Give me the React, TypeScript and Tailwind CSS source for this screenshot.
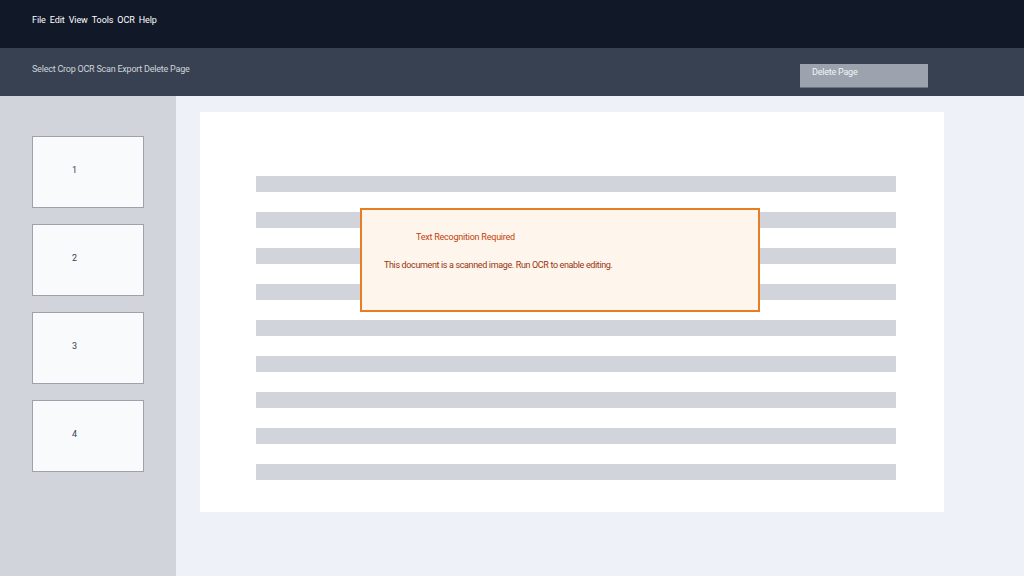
import React from 'react';

const menuItems = ['File', 'Edit', 'View', 'Tools', 'OCR', 'Help'];
const toolItems = ['Select', 'Crop', 'OCR Scan', 'Export', 'Delete Page'];
const pages = [1, 2, 3, 4];
const lines = Array.from({ length: 9 }, (_, i) => i);

const App: React.FC = () => {
  return (
    <div className="w-[1024px] h-[576px] flex flex-col overflow-hidden font-['Roboto',_'Liberation_Sans',_sans-serif]">
      {/* Menu bar */}
      <header className="h-12 shrink-0 bg-[#111827] flex items-start px-8 pt-[15px]">
        <nav className="flex gap-[4px] text-[9px] leading-[11px] text-white tracking-[-0.01em]">
          {menuItems.map((item) => (
            <span key={item}>{item}</span>
          ))}
        </nav>
      </header>

      {/* Toolbar */}
      <div className="h-12 shrink-0 bg-[#374151] flex items-start pl-8 pt-4">
        <div className="flex gap-[2px] text-[9px] text-[#d1d5db] tracking-tight leading-[11px]">
          {toolItems.map((item) => (
            <span key={item}>{item}</span>
          ))}
        </div>
        <button className="ml-auto mr-24 w-32 h-6 bg-[#9ca3af] border-b border-[#6b7280] flex items-start pl-3 pt-[3px] text-[9px] leading-[11px] text-[#f3f4f6] tracking-tight">
          Delete Page
        </button>
      </div>

      <div className="flex flex-1 min-h-0">
        {/* Page thumbnails */}
        <aside className="w-44 shrink-0 bg-[#d1d5db] flex flex-col gap-4 pt-10 pl-8">
          {pages.map((p) => (
            <div key={p} className="w-28 h-[72px] bg-[#f8fafc] border border-[#9ca3af] pt-[27px] pl-[39px] text-[9px] text-[#374151]">
              {p}
            </div>
          ))}
        </aside>

        {/* Document canvas */}
        <main className="flex-1 bg-[#eef1f7] pt-4 pl-6">
          <div className="relative w-[744px] h-[400px] bg-white pt-16 pl-14">
            <div className="flex flex-col gap-5">
              {lines.map((l) => (
                <div key={l} className="w-[640px] h-4 bg-[#d1d5db]" />
              ))}
            </div>

            {/* OCR notice */}
            <div className="absolute left-[160px] top-[96px] w-[400px] h-[104px] bg-[#fef6ec] border-2 border-[#e67e22] pl-[22px] pt-[21px]">
              <p className="pl-8 text-[9px] text-[#c2410c] tracking-tight">Text Recognition Required</p>
              <p className="mt-[14px] text-[9px] text-[#9a3412] tracking-[-0.04em]">
                This document is a scanned image. Run OCR to enable editing.
              </p>
            </div>
          </div>
        </main>
      </div>
    </div>
  );
};

export default App;
